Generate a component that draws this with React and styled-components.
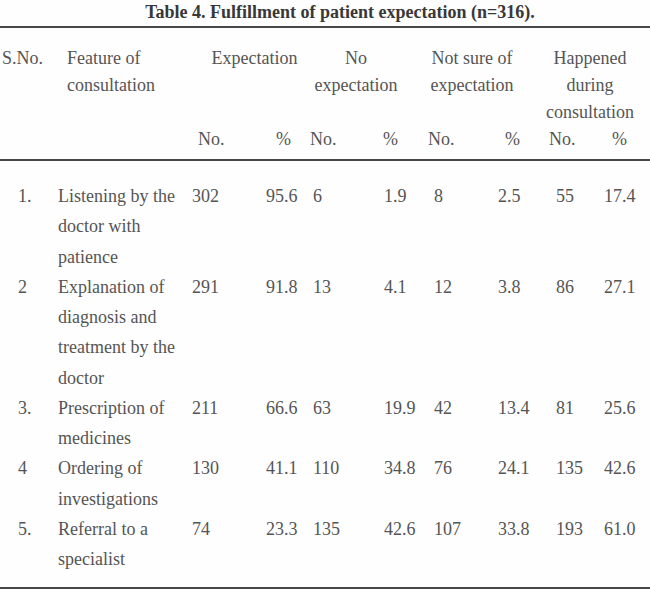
import React from 'react';
import styled, { createGlobalStyle } from 'styled-components';

const GlobalStyle = createGlobalStyle`
  body {
    margin: 0;
    background: #fefefe;
    font-family: "Liberation Serif", "Times New Roman", serif;
  }
`;

const Page = styled.div`
  width: 650px;
  color: #555555;
`;

const Title = styled.h3`
  margin: 0 0 2px 0;
  padding-left: 30px;
  font-size: 18px;
  font-weight: 700;
  line-height: 24px;
  text-align: center;
  color: #383838;
`;

const Table = styled.table`
  width: 650px;
  border-collapse: collapse;
  table-layout: fixed;
  font-size: 18px;
`;

const Head = styled.thead`
  border-top: 2px solid #484848;
  border-bottom: 2px solid #484848;
`;

const Body = styled.tbody`
  border-bottom: 2px solid #484848;
`;

const Th = styled.th`
  padding: ${(props) => (props.$top ? '17px' : '0')} ${(props) => props.$pr || 0}px
    ${(props) => (props.$bottom ? '6px' : '0')} ${(props) => props.$pl || 0}px;
  font-weight: 400;
  line-height: 27px;
  vertical-align: top;
  text-align: ${(props) => (props.$center ? 'center' : 'left')};
  white-space: nowrap;
`;

const Td = styled.td`
  padding: ${(props) => (props.$first ? '20px' : '0')} 0
    ${(props) => (props.$last ? '13px' : '0')} ${(props) => props.$pl || 0}px;
  line-height: 30.25px;
  vertical-align: top;
  text-align: left;
`;

const widths = [58, 132, 72, 46, 72, 47, 69, 48, 58, 48];
const dataPad = [18, 0, 2, 4, 5, 4, 7, 2, 12, 2];
const subPad = [0, 0, 8, 14, 2, 3, 1, 9, 5, 10];
const subText = ['', '', 'No.', '%', 'No.', '%', 'No.', '%', 'No.', '%'];

const rows = [
  ['1.', 'Listening by the doctor with patience', '302', '95.6', '6', '1.9', '8', '2.5', '55', '17.4'],
  ['2', 'Explanation of diagnosis and treatment by the doctor', '291', '91.8', '13', '4.1', '12', '3.8', '86', '27.1'],
  ['3.', 'Prescription of medicines', '211', '66.6', '63', '19.9', '42', '13.4', '81', '25.6'],
  ['4', 'Ordering of investigations', '130', '41.1', '110', '34.8', '76', '24.1', '135', '42.6'],
  ['5.', 'Referral to a specialist', '74', '23.3', '135', '42.6', '107', '33.8', '193', '61.0'],
];

const App = () => {
  return (
    <Page>
      <GlobalStyle />
      <Title>Table 4. Fulfillment of patient expectation (n=316).</Title>
      <Table>
        <colgroup>
          {widths.map((w, i) => (
            <col key={i} style={{ width: w }} />
          ))}
        </colgroup>
        <Head>
          <tr>
            <Th $top $pl={2}>S.No.</Th>
            <Th $top $pl={9}>Feature of<br />consultation</Th>
            <Th $top colSpan={2} $center $pl={11}>Expectation</Th>
            <Th $top colSpan={2} $center $pr={23}>No<br />expectation</Th>
            <Th $top colSpan={2} $center $pr={27}>Not sure of<br />expectation</Th>
            <Th $top colSpan={2} $center $pr={14}>Happened<br />during<br />consultation</Th>
          </tr>
          <tr>
            {subText.map((t, i) => (
              <Th key={i} $bottom $pl={subPad[i]}>{t}</Th>
            ))}
          </tr>
        </Head>
        <Body>
          {rows.map((row, r) => (
            <tr key={r}>
              {row.map((cell, c) => (
                <Td key={c} $pl={dataPad[c]} $first={r === 0} $last={r === rows.length - 1}>
                  {cell}
                </Td>
              ))}
            </tr>
          ))}
        </Body>
      </Table>
    </Page>
  );
};

export default App;
